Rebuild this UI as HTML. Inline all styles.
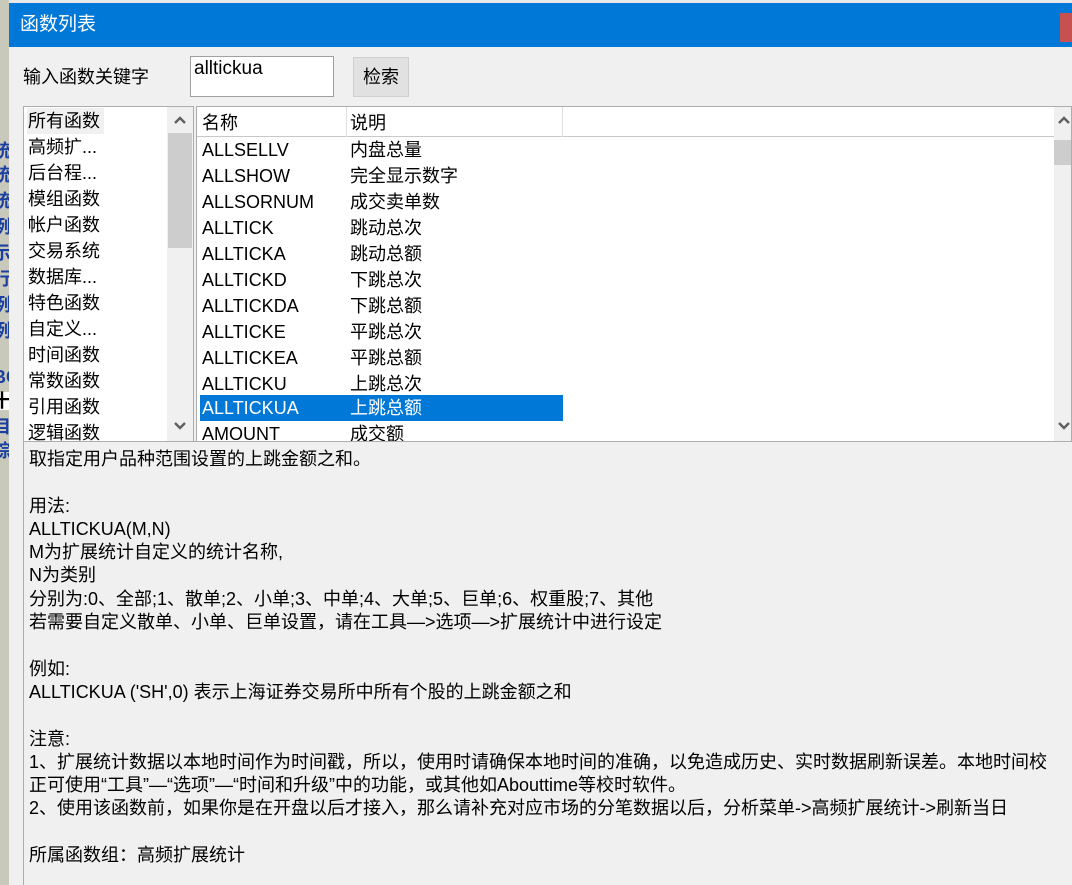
<!DOCTYPE html>
<html><head><meta charset="utf-8"><style>
*{margin:0;padding:0;box-sizing:border-box}
body{width:1072px;height:885px;overflow:hidden;background:#f0f0f0;position:relative;font-family:"Liberation Sans","Noto Sans CJK SC",sans-serif;font-size:18px;color:#000}
.a{position:absolute}
.strip{left:0;top:0;width:9px;height:885px;background:#c9c9bb;overflow:hidden}
.strip div{position:absolute;left:-7px;color:#1a3fa0;font-weight:bold;font-size:18px;line-height:18px}
.title{left:9px;top:3px;width:1063px;height:44px;background:#0078d7;color:#fff;font-size:19px;line-height:44px;padding-left:11px}
.close{left:1060px;top:13px;width:12px;height:29px;background:#c75050}
.box{border:1px solid #adadad;background:#fff}
.row{position:absolute;height:26px;line-height:26px;white-space:nowrap}
.sb{background:#f0f0f0}
.desc div{height:23.3px;line-height:23.3px;white-space:pre}
</style></head><body>
<div class="a" style="left:0;top:0;width:1072px;height:3px;background:#e8e8e8"></div>
<div class="a strip">
<div style="top:142px">统</div><div style="top:166px">统</div><div style="top:192px">统</div><div style="top:218px">例</div><div style="top:244px">示</div><div style="top:270px">行</div><div style="top:296px">例</div><div style="top:322px">例</div><div style="top:368px">BC</div><div style="top:392px;color:#000;background:#fff;width:16px">十</div><div style="top:418px">目</div><div style="top:442px">综</div>
</div>
<div class="a title">函数列表</div>
<div class="a close"></div>
<div class="a" style="left:23px;top:63px;font-size:18px">输入函数关键字</div>
<div class="a" style="left:190px;top:56px;width:144px;height:41px;background:#fff;border:1px solid #a0a0a0;padding:1px 3px;font-size:19px">alltickua</div>
<div class="a" style="left:353px;top:57px;width:56px;height:40px;background:#e1e1e1;border:1px solid #cfcfcf;text-align:center;line-height:38px">检索</div>

<div class="a box" style="left:23px;top:106px;width:171px;height:336px;overflow:hidden">
<div class="a" style="left:3px;top:1px;width:77px;height:26px;background:#f0f0f0"></div>
<div class="row" style="left:4px;top:1px">所有函数</div>
<div class="row" style="left:4px;top:27px">高频扩...</div>
<div class="row" style="left:4px;top:53px">后台程...</div>
<div class="row" style="left:4px;top:79px">模组函数</div>
<div class="row" style="left:4px;top:105px">帐户函数</div>
<div class="row" style="left:4px;top:131px">交易系统</div>
<div class="row" style="left:4px;top:157px">数据库...</div>
<div class="row" style="left:4px;top:183px">特色函数</div>
<div class="row" style="left:4px;top:209px">自定义...</div>
<div class="row" style="left:4px;top:235px">时间函数</div>
<div class="row" style="left:4px;top:261px">常数函数</div>
<div class="row" style="left:4px;top:287px">引用函数</div>
<div class="row" style="left:4px;top:313px">逻辑函数</div>
<div class="a sb" style="left:143px;top:0;width:26px;height:334px"></div>
<div class="a" style="left:144px;top:26px;width:24px;height:115px;background:#cdcdcd"></div>
<svg class="a" style="left:149px;top:8px" width="14" height="10"><path d="M2 8 L7 3 L12 8" stroke="#606060" stroke-width="2.4" fill="none"/></svg>
<svg class="a" style="left:149px;top:314px" width="14" height="10"><path d="M2 2 L7 7 L12 2" stroke="#606060" stroke-width="2.4" fill="none"/></svg>
</div>

<div class="a box" style="left:196px;top:106px;width:876px;height:336px;overflow:hidden">
<div class="a" style="left:0;top:0;width:858px;height:30px;border-bottom:1px solid #c8c8c8"></div>
<div class="a" style="left:149px;top:0;width:1px;height:30px;background:#e0e0e0"></div>
<div class="a" style="left:365px;top:0;width:1px;height:30px;background:#e0e0e0"></div>
<div class="row" style="left:5px;top:3px">名称</div>
<div class="row" style="left:153px;top:3px">说明</div>
<div class="a" style="left:3px;top:288px;width:363px;height:26px;background:#0078d7"></div>
<div class="row" style="left:5px;top:30px">ALLSELLV</div><div class="row" style="left:153px;top:30px">内盘总量</div>
<div class="row" style="left:5px;top:56px">ALLSHOW</div><div class="row" style="left:153px;top:56px">完全显示数字</div>
<div class="row" style="left:5px;top:82px">ALLSORNUM</div><div class="row" style="left:153px;top:82px">成交卖单数</div>
<div class="row" style="left:5px;top:108px">ALLTICK</div><div class="row" style="left:153px;top:108px">跳动总次</div>
<div class="row" style="left:5px;top:134px">ALLTICKA</div><div class="row" style="left:153px;top:134px">跳动总额</div>
<div class="row" style="left:5px;top:160px">ALLTICKD</div><div class="row" style="left:153px;top:160px">下跳总次</div>
<div class="row" style="left:5px;top:186px">ALLTICKDA</div><div class="row" style="left:153px;top:186px">下跳总额</div>
<div class="row" style="left:5px;top:212px">ALLTICKE</div><div class="row" style="left:153px;top:212px">平跳总次</div>
<div class="row" style="left:5px;top:238px">ALLTICKEA</div><div class="row" style="left:153px;top:238px">平跳总额</div>
<div class="row" style="left:5px;top:264px">ALLTICKU</div><div class="row" style="left:153px;top:264px">上跳总次</div>
<div class="row" style="left:5px;top:288px;color:#fff">ALLTICKUA</div><div class="row" style="left:153px;top:288px;color:#fff">上跳总额</div>
<div class="row" style="left:5px;top:314px">AMOUNT</div><div class="row" style="left:153px;top:314px">成交额</div>
<div class="a sb" style="left:857px;top:0;width:19px;height:334px"></div>
<div class="a" style="left:857px;top:33px;width:19px;height:25px;background:#cdcdcd"></div>
<svg class="a" style="left:860px;top:8px" width="14" height="10"><path d="M2 8 L7 3 L12 8" stroke="#606060" stroke-width="2.4" fill="none"/></svg>
<svg class="a" style="left:860px;top:314px" width="14" height="10"><path d="M2 2 L7 7 L12 2" stroke="#606060" stroke-width="2.4" fill="none"/></svg>
</div>

<div class="a desc" style="left:23px;top:441px;width:1049px;height:444px;border-left:1px solid #adadad;border-top:1px solid #adadad;background:#f0f0f0;padding:6px 0 0 5px;font-size:18px">
<div>取指定用户品种范围设置的上跳金额之和。</div>
<div> </div>
<div>用法:</div>
<div>ALLTICKUA(M,N)</div>
<div>M为扩展统计自定义的统计名称,</div>
<div>N为类别</div>
<div>分别为:0、全部;1、散单;2、小单;3、中单;4、大单;5、巨单;6、权重股;7、其他</div>
<div>若需要自定义散单、小单、巨单设置，请在工具—&gt;选项—&gt;扩展统计中进行设定</div>
<div> </div>
<div>例如:</div>
<div>ALLTICKUA ('SH',0) 表示上海证券交易所中所有个股的上跳金额之和</div>
<div> </div>
<div>注意:</div>
<div>1、扩展统计数据以本地时间作为时间戳，所以，使用时请确保本地时间的准确，以免造成历史、实时数据刷新误差。本地时间校</div>
<div>正可使用“工具”—“选项”—“时间和升级”中的功能，或其他如Abouttime等校时软件。</div>
<div>2、使用该函数前，如果你是在开盘以后才接入，那么请补充对应市场的分笔数据以后，分析菜单-&gt;高频扩展统计-&gt;刷新当日</div>
<div> </div>
<div>所属函数组：高频扩展统计</div>
</div>
</body></html>
